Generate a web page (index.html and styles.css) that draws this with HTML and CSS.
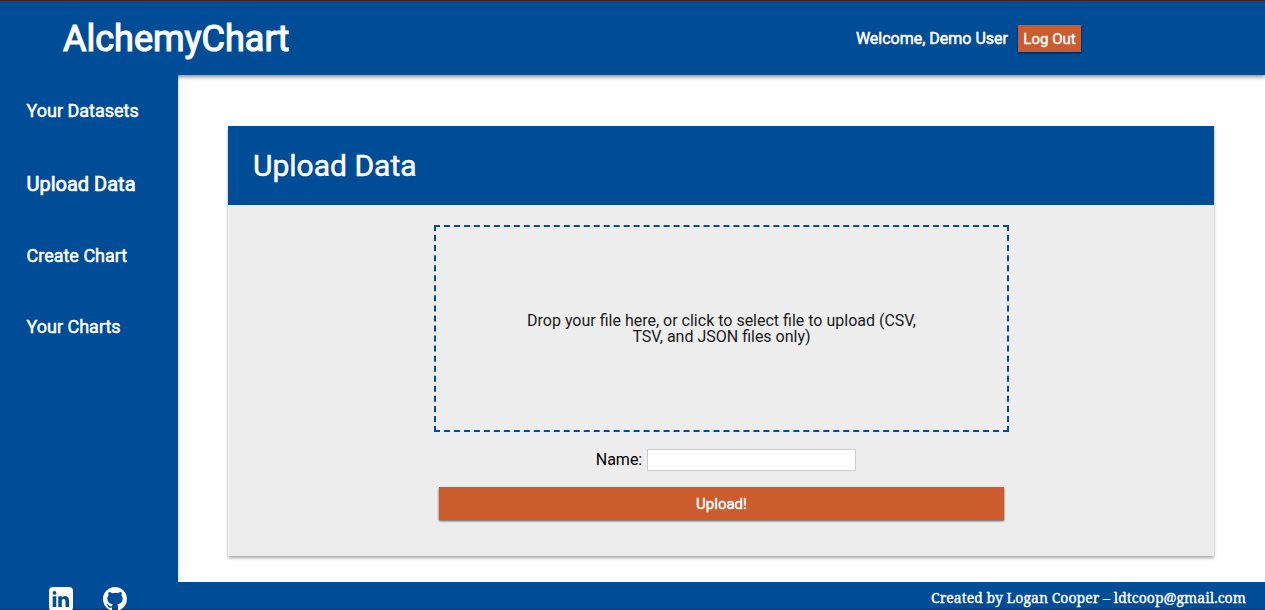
FILE: index.html
```html
<!DOCTYPE html>
<html lang="en">
<head>
<meta charset="utf-8">
<title>AlchemyChart</title>
<link rel="stylesheet" href="styles.css">
</head>
<body>
<div class="app">
  <header class="header">
    <h1 class="logo">AlchemyChart</h1>
    <div class="session">
      <span class="welcome">Welcome, Demo User</span>
      <button class="logout" type="button">Log Out</button>
    </div>
  </header>
  <div class="body">
    <nav class="sidebar">
      <a class="link">Your Datasets</a>
      <a class="link active">Upload Data</a>
      <a class="link">Create Chart</a>
      <a class="link">Your Charts</a>
    </nav>
    <main class="main">
      <section class="card">
        <h2 class="card-title">Upload Data</h2>
        <form class="form">
          <div class="dropzone"><p class="hint">Drop your file here, or click to select file to upload (CSV,<br>TSV, and JSON files only)</p></div>
          <div class="name-row"><label class="label" for="name">Name:</label><input class="input" id="name" type="text"></div>
          <button class="upload" type="button">Upload!</button>
        </form>
      </section>
    </main>
  </div>
  <footer class="footer">
    <div class="social">
      <svg class="icon" viewBox="0 0 24 24"><path fill-rule="evenodd" d="M4 0h16a4 4 0 0 1 4 4v16a4 4 0 0 1-4 4H4a4 4 0 0 1-4-4V4a4 4 0 0 1 4-4zM3.700 9.300V20h3.600V9.300zM5.500 4a1.900 1.900 0 1 0 0 3.800 1.900 1.900 0 0 0 0-3.800zM9.300 9.300V20h3.500v-6c0-1.300.8-2.100 1.900-2.100 1.300 0 1.800.9 1.800 2.400V20h3.600v-6.100c0-3.300-1.700-4.800-4.100-4.800-1.700 0-2.600.9-3.200 1.700V9.300z"/></svg>
      <svg class="icon" viewBox="0 0 16 16"><path d="M8 0C3.580 0 0 3.580 0 8c0 3.540 2.290 6.530 5.470 7.590.4.070.55-.17.55-.38 0-.19-.01-.82-.01-1.490-2.010.37-2.530-.49-2.690-.94-.09-.23-.48-.94-.82-1.130-.28-.15-.68-.52-.01-.53.63-.01 1.080.58 1.230.82.72 1.210 1.870.87 2.330.66.07-.52.28-.87.51-1.070-1.780-.2-3.640-.89-3.640-3.950 0-.87.31-1.590.82-2.150-.08-.2-.36-1.020.08-2.120 0 0 .67-.21 2.200.82a7.600 7.600 0 0 1 4 0c1.530-1.040 2.200-.82 2.200-.82.44 1.100.16 1.920.08 2.120.51.56.82 1.270.82 2.150 0 3.070-1.870 3.750-3.650 3.950.29.25.54.73.54 1.480 0 1.070-.01 1.930-.01 2.200 0 .21.15.46.55.38A8 8 0 0 0 16 8c0-4.420-3.580-8-8-8z"/></svg>
    </div>
    <p class="credit">Created by Logan Cooper – ldtcoop@gmail.com</p>
  </footer>
</div>
</body>
</html>
```
FILE: styles.css
```css
* { box-sizing: border-box; margin: 0; padding: 0; }
body { font-family: Roboto, "Liberation Sans", sans-serif; overflow: hidden; }
.app { height: 610px; display: flex; flex-direction: column; background: #fff; overflow: hidden; }
.header { height: 75px; flex: none; background: #004c97; border-top: 1px solid #4a1f1c; color: #fff; display: flex; justify-content: space-between; padding-left: 63px; padding-right: 184px; box-shadow: 0 2px 4px rgba(0,0,0,.45); }
.logo { font-size: 36px; font-weight: 400; line-height: 76px; -webkit-text-stroke: 1.2px #fff; }
.session { display: flex; align-items: center; gap: 10px; }
.welcome { font-size: 16px; -webkit-text-stroke: .5px #fff; }
.logout { width: 63px; height: 27px; padding-top: 1px; border: 0; background: #cb5c2e; color: #fff; font: 400 15px Roboto, sans-serif; -webkit-text-stroke: .4px #fff; box-shadow: 0 1px 2px rgba(0,0,30,.7); }
.body { flex: 1; display: flex; min-height: 0; }
.sidebar { width: 178px; background: #004c97; padding: 25px 0 0 26.5px; display: flex; flex-direction: column; position: relative; box-shadow: 1px 0 2px rgba(0,0,0,.15); clip-path: inset(0 -4px 0 0); }
.link { color: #fff; font-size: 18px; -webkit-text-stroke: .5px #fff; line-height: 22px; margin-bottom: 49px; }
.link.active { font-size: 20px; -webkit-text-stroke: .7px #fff; line-height: 24px; margin-top: 1px; margin-bottom: 49px; }
.main { flex: 1; padding: 51px 51px 0 50px; }
.card { height: 430px; background: #ededed; box-shadow: 0 2px 3px rgba(0,0,0,.35); }
.card-title { height: 79px; background: #004c97; color: #fff; font-size: 30px; font-weight: 400; -webkit-text-stroke: .5px #fff; line-height: 79px; padding-left: 25px; }
.form { display: flex; flex-direction: column; align-items: center; padding-top: 20px; }
.dropzone { width: 575px; height: 207px; border: 2px dashed #004c97; display: flex; align-items: center; justify-content: center; margin-left: 1px; }
.hint { font-size: 16px; line-height: 16px; color: #1a1a1a; text-align: center; white-space: nowrap; }
.name-row { display: flex; align-items: center; gap: 5px; margin: 17px 0 16px 10px; font-size: 16px; color: #000; }
.label { padding-bottom: 2px; }
.input { width: 209px; height: 22px; border: 1px solid #ccc; background: #fff; }
.upload { width: 565px; height: 33px; border: 0; background: #cb5c2e; color: #fff; font: 400 15px Roboto, sans-serif; -webkit-text-stroke: .4px #fff; box-shadow: 0 1px 2px rgba(0,0,0,.65); margin-left: 1px; }
.footer { height: 28px; flex: none; background: #004c97; color: #fff; display: flex; justify-content: space-between; padding: 5px 19px 0 49px; box-shadow: inset 0 -1px 1px rgba(0,0,0,.25); }
.social { display: flex; gap: 30px; height: 23px; overflow: hidden; }
.icon { width: 24px; height: 24px; fill: #fff; }
.credit { font: 14px/22px "Droid Serif", "Noto Serif", "DejaVu Serif Condensed", "DejaVu Serif", serif; white-space: nowrap; letter-spacing: .04px; -webkit-text-stroke: .35px #fff; }
```
